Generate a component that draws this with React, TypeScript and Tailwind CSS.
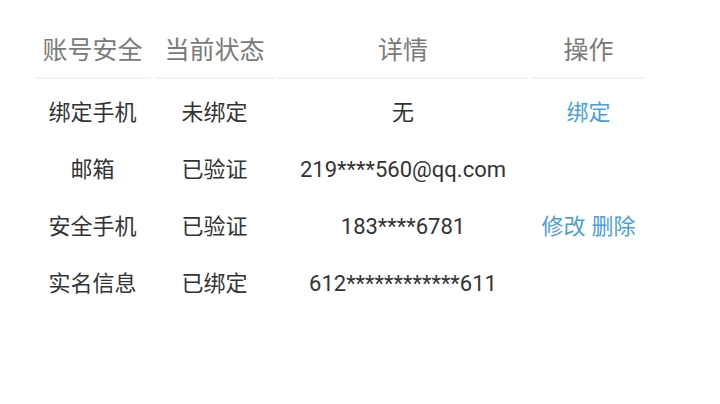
export default function App() {
  const rows = [
    { name: "绑定手机", status: "未绑定", detail: "无", ops: ["绑定"] },
    { name: "邮箱", status: "已验证", detail: "219****560@qq.com", ops: [] },
    { name: "安全手机", status: "已验证", detail: "183****6781", ops: ["修改", "删除"] },
    { name: "实名信息", status: "已绑定", detail: "612************611", ops: [] },
  ];
  const headers = ["账号安全", "当前状态", "详情", "操作"];
  return (
    <div
      className="w-[720px] h-[404px] bg-white pt-5 pl-[34px]"
      style={{ fontFamily: 'Roboto, "Noto Sans CJK SC", "Noto Sans", sans-serif' }}
    >
      <div className="grid grid-cols-[117px_119px_250px_113px] gap-x-1 w-fit">
        {headers.map((h) => (
          <div
            key={h}
            className="h-[59px] flex items-center justify-center border-b-2 border-[#f3f3f3] text-[25px] text-[#7a7a7a] pt-[4px]"
          >
            {h}
          </div>
        ))}
        <div className="col-span-4 h-1" />
        {rows.map((r) => (
          <>
            <div key={r.name + "a"} className="h-[57px] flex items-center justify-center text-[22px] text-[#333] pt-[2px]">
              {r.name}
            </div>
            <div key={r.name + "b"} className="h-[57px] flex items-center justify-center text-[22px] text-[#333] pt-[2px]">
              {r.status}
            </div>
            <div key={r.name + "c"} className="h-[57px] flex items-center justify-center text-[22px] text-[#333] pt-[2px]">
              {r.detail}
            </div>
            <div key={r.name + "d"} className="h-[57px] flex items-center justify-center gap-[6px] text-[22px] text-[#4a9fd5] pt-[2px]">
              {r.ops.map((o) => (
                <span key={o}>{o}</span>
              ))}
            </div>
          </>
        ))}
      </div>
    </div>
  );
}
